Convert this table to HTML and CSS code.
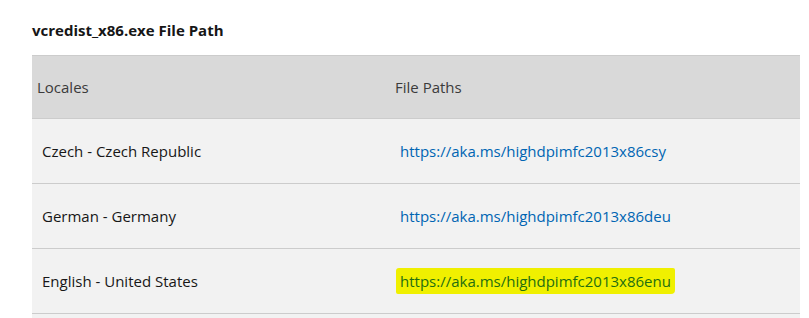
FILE: index.html
```html
<!DOCTYPE html>
<html lang="en">
<head>
<meta charset="utf-8">
<title>vcredist_x86.exe File Path</title>
<link rel="stylesheet" href="styles.css">
</head>
<body>
<main class="page">
  <h3 class="title">vcredist_x86.exe File Path</h3>
  <table class="paths">
    <thead>
      <tr><th class="col-locale">Locales</th><th>File Paths</th></tr>
    </thead>
    <tbody>
      <tr><td>Czech - Czech Republic</td><td><a href="#">https://aka.ms/highdpimfc2013x86csy</a></td></tr>
      <tr><td>German - Germany</td><td><a href="#">https://aka.ms/highdpimfc2013x86deu</a></td></tr>
      <tr><td>English - United States</td><td><a href="#" class="marked">https://aka.ms/highdpimfc2013x86enu</a></td></tr>
      <tr><td>&nbsp;</td><td>&nbsp;</td></tr>
    </tbody>
  </table>
</main>
</body>
</html>
```
FILE: styles.css
```css
html, body {
  margin: 0;
  padding: 0;
  background: #ffffff;
  overflow: hidden;
}
.page {
  padding: 0 9px 0 32px;
  font-family: "Open Sans", "Noto Sans", sans-serif;
  color: #171717;
}
.title {
  margin: 0;
  padding: 20px 0 15px;
  font-size: 15px;
  line-height: 20px;
  font-weight: 700;
  color: #161616;
}
.paths {
  width: 100%;
  border-collapse: collapse;
  font-size: 15px;
  line-height: 20px;
}
.paths th {
  background: #d9d9d9;
  text-align: left;
  font-weight: 400;
  color: #3b3b3b;
  height: 62px;
  padding: 0 5px;
  border-top: 1px solid #cccccc;
  border-bottom: 1px solid #cccccc;
}
.paths .col-locale {
  width: 348px;
}
.paths td {
  background: #f2f2f2;
  height: 64px;
  padding: 0 10px;
  border-bottom: 1px solid #cccccc;
  color: #171717;
}
.paths a {
  color: #0065b3;
  text-decoration: none;
}
.paths a.marked {
  background: #f0f000;
  color: #1f6e12;
  padding: 3px 4px 3px 4px;
  margin-left: -4px;
  border-radius: 3px 2px 4px 2px;
}
```
